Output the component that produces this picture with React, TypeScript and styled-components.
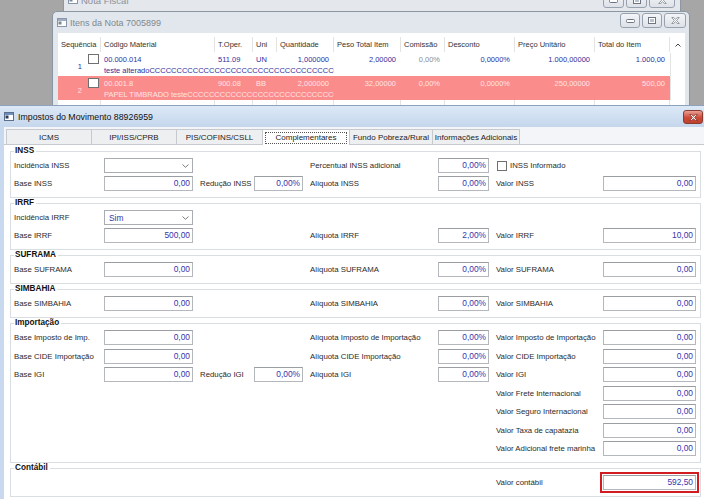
import React from "react";
import styled, { createGlobalStyle } from "styled-components";

const GlobalStyle = createGlobalStyle`
  html, body { margin: 0; padding: 0; }
  body {
    background: #a6a6a6;
    font-family: "Liberation Sans", Arial, sans-serif;
  }
`;

const Desktop = styled.div`
  position: relative;
  width: 704px;
  height: 499px;
  overflow: hidden;
  background: #a6a6a6;
`;

/* ---------- window chrome ---------- */

const BackWindow = styled.div`
  position: absolute;
  left: 63px;
  top: -16px;
  width: 618px;
  height: 40px;
  box-sizing: border-box;
  background: #e4e8ed;
  border: 1px solid #8d97a3;
  border-radius: 5px 5px 0 0;
  display: flex;
  align-items: flex-start;
  padding: 10px 2px 0 4px;
  gap: 3px;
  color: #8a9098;
  font-size: 9.5px;
`;

const ItemsWindow = styled.div`
  position: absolute;
  left: 52px;
  top: 11px;
  width: 638px;
  height: 110px;
  box-sizing: border-box;
  background: #e2e7ed;
  border: 1px solid #8b96a3;
  border-radius: 5px 5px 0 0;
  display: flex;
  flex-direction: column;
`;

const InactiveTitleBar = styled.div`
  height: 21px;
  flex: none;
  display: flex;
  align-items: center;
  padding-left: 4px;
  gap: 3px;
  color: #80878f;
  font-size: 9px;
`;

const CaptionButtons = styled.div<{ $top?: number }>`
  margin-left: auto;
  align-self: flex-start;
  margin-top: ${(p) => p.$top ?? 1}px;
  margin-right: 3px;
  display: flex;
  gap: 2px;
`;

const CaptionButton = styled.div<{ $w: number }>`
  width: ${(p) => p.$w}px;
  height: 15px;
  box-sizing: border-box;
  border: 1px solid #98a2ae;
  border-radius: 3px;
  background: linear-gradient(#f3f5f8, #dde2e8);
  display: flex;
  align-items: center;
  justify-content: center;
`;

const MainWindow = styled.div`
  position: absolute;
  left: 0;
  top: 105px;
  width: 704px;
  height: 394px;
  box-sizing: border-box;
  background: #c8d9ef;
  border-top: 1px solid #8ea2bc;
  display: flex;
  flex-direction: column;
`;

const ActiveTitleBar = styled.div`
  height: 21px;
  flex: none;
  display: flex;
  align-items: center;
  gap: 4px;
  padding-left: 4px;
  background: linear-gradient(#dce8f6, #c5d7ed);
  color: #111;
  font-size: 8.8px;
`;

const CloseRed = styled.div`
  margin-left: auto;
  margin-right: 1px;
  align-self: flex-start;
  margin-top: 4px;
  width: 20px;
  height: 14px;
  box-sizing: border-box;
  border: 1px solid #8b3a30;
  border-radius: 3px;
  background: linear-gradient(#e9a094, #cc4a38 55%, #c0402e);
  display: flex;
  align-items: center;
  justify-content: center;
`;

const WindowBody = styled.div`
  flex: 1;
  margin-left: 4px;
  background: #f3f5f8;
  display: flex;
  flex-direction: column;
  min-height: 0;
`;

/* ---------- tabs ---------- */

const TabStrip = styled.div`
  height: 17px;
  flex: none;
  display: flex;
  align-items: flex-end;
  padding-left: 2px;
  box-sizing: border-box;
`;

const Tab = styled.div<{ $w: number; $active?: boolean }>`
  width: ${(p) => p.$w}px;
  height: ${(p) => (p.$active ? 16 : 15)}px;
  margin-right: -1px;
  box-sizing: border-box;
  border: 1px solid #c6c9cd;
  border-bottom: none;
  background: ${(p) => (p.$active ? "#ffffff" : "#eeeff1")};
  color: #222;
  font-size: 8px;
  display: flex;
  align-items: center;
  justify-content: center;
  position: relative;
  z-index: ${(p) => (p.$active ? 1 : 0)};
  margin-bottom: ${(p) => (p.$active ? -1 : 0)}px;
`;

const FocusBox = styled.span`
  border: 1px dotted #555;
  padding: 0 10px;
  line-height: 10px;
`;

const Panel = styled.div`
  flex: 1;
  background: #ffffff;
  border-top: 1px solid #c6c9cd;
  padding: 6px 3px 0 6px;
  display: flex;
  flex-direction: column;
  gap: 5px;
`;

/* ---------- groups / form ---------- */

const Group = styled.div`
  position: relative;
  border: 1px solid #d9dee3;
  padding: 6px 4px 6px 3px;
`;

const Legend = styled.div`
  position: absolute;
  top: -6px;
  left: 3px;
  padding: 0 2px 0 1px;
  background: #ffffff;
  font-size: 8.2px;
  font-weight: bold;
  color: #111;
  line-height: 10px;
`;

const Rows = styled.div<{ $gap: number }>`
  display: flex;
  flex-direction: column;
  gap: ${(p) => p.$gap}px;
`;

const Row = styled.div`
  display: grid;
  grid-template-columns: 90px 89px 61px 49px 135px 51px 114px 93px;
  height: 15px;
  align-items: center;
`;

const Label = styled.div<{ $col: number }>`
  grid-column: ${(p) => p.$col};
  padding-left: ${(p) => (p.$col === 1 ? 0 : 7)}px;
  font-size: 7.8px;
  color: #2a2a2a;
  white-space: nowrap;
`;

const Field = styled.div<{ $col: number; $highlight?: boolean }>`
  grid-column: ${(p) => p.$col};
  height: 15px;
  box-sizing: border-box;
  border: 1px solid #b4b7bb;
  border-top-color: #9a9da2;
  background: #fff;
  font-size: 8.4px;
  color: #3636ad;
  text-align: right;
  padding-right: 2px;
  line-height: 13px;
  outline: ${(p) => (p.$highlight ? "2px solid #d11c22" : "none")};
  outline-offset: 1px;
`;

const Select = styled.div<{ $col: number }>`
  grid-column: ${(p) => p.$col};
  height: 15px;
  box-sizing: border-box;
  border: 1px solid #a9acb0;
  background: #fff;
  font-size: 8.4px;
  color: #3636ad;
  display: flex;
  align-items: center;
  justify-content: space-between;
  padding: 0 3px 0 4px;
`;

const CheckWrap = styled.div<{ $col: number }>`
  grid-column: ${(p) => p.$col} / span 2;
  display: flex;
  align-items: center;
  gap: 3px;
  padding-left: 8px;
  font-size: 7.8px;
  color: #2a2a2a;
`;

const CheckBox = styled.span`
  width: 10px;
  height: 10px;
  box-sizing: border-box;
  border: 1px solid #707070;
  background: #fff;
  flex: none;
`;

/* ---------- items grid ---------- */

const COLS = "43px 114px 38px 24px 57px 67px 44px 70px 80px 75px 15px";

const ItemsGrid = styled.div`
  flex: 1;
  margin: 0 4px 0 5px;
  background: #fff;
  padding-top: 4px;
  font-size: 7.5px;
  color: #333;
  display: flex;
  flex-direction: column;
`;

const GridHeader = styled.div`
  display: grid;
  grid-template-columns: ${COLS};
  height: 15px;
`;

const HeadCell = styled.div`
  border-right: 1px solid #e3e3e3;
  padding-left: 3px;
  display: flex;
  align-items: center;
  white-space: nowrap;
  overflow: hidden;
  &:last-child {
    border-right: none;
    justify-content: center;
    padding-left: 0;
  }
`;

const ItemRow = styled.div<{ $selected?: boolean }>`
  display: grid;
  grid-template-columns: ${COLS};
  grid-template-rows: 12px 11px;
  height: 24px;
  padding-top: 1px;
  box-sizing: border-box;
  color: ${(p) => (p.$selected ? "#fde4e4" : "#2f2f9c")};
  background: ${(p) =>
    p.$selected
      ? "linear-gradient(to right, #fb8c8c 612px, #ffffff 612px)"
      : "#ffffff"};
`;

const SeqCell = styled.div`
  grid-row: 1 / span 2;
  display: flex;
  justify-content: flex-end;
  gap: 6px;
  padding-right: 2px;
  align-items: flex-start;
`;

const SeqNumber = styled.span`
  margin-top: 9px;
`;

const ItemCheck = styled.span`
  margin-top: 1px;
  width: 11px;
  height: 10px;
  box-sizing: border-box;
  border: 1px solid #707070;
  background: #fff;
`;

const Cell = styled.div<{ $right?: boolean; $muted?: string }>`
  display: flex;
  align-items: center;
  white-space: nowrap;
  justify-content: ${(p) => (p.$right ? "flex-end" : "flex-start")};
  padding: ${(p) => (p.$right ? "0 5px 0 0" : "0 0 0 3px")};
  color: ${(p) => p.$muted || "inherit"};
`;

const Description = styled.div`
  grid-row: 2;
  grid-column: 2 / span 4;
  padding-left: 3px;
  white-space: nowrap;
  overflow: hidden;
  display: flex;
  align-items: center;
`;

const ScrollCell = styled.div`
  grid-column: 11;
  grid-row: 1 / span 2;
  border-left: 1px solid #e3e3e3;
  background: #fff;
`;

const EmptyRow = styled.div`
  display: grid;
  grid-template-columns: ${COLS};
  flex: 1;
  & > div {
    border-right: 1px solid #e3e3e3;
  }
`;

/* ---------- icons ---------- */

function WinIcon({ faded }: { faded?: boolean }) {
  return (
    <svg width="10" height="9" viewBox="0 0 10 9">
      <rect x="0.5" y="0.5" width="9" height="8" fill="#fff" stroke={faded ? "#8796a8" : "#5b6f8d"} />
      <rect x="1" y="1" width="8" height="2" fill={faded ? "#9fb0c4" : "#6f8fbf"} />
      <rect x="1.5" y="3.5" width="3" height="3" fill={faded ? "#7c8796" : "#2d3b55"} />
    </svg>
  );
}

function MinGlyph() {
  return (
    <svg width="9" height="5" viewBox="0 0 9 5">
      <rect x="0.5" y="1.5" width="8" height="3" rx="1" fill="#fff" stroke="#6c7580" />
    </svg>
  );
}

function MaxGlyph() {
  return (
    <svg width="8" height="7" viewBox="0 0 8 7">
      <rect x="0.5" y="0.5" width="7" height="6" fill="#fff" stroke="#6c7580" />
      <rect x="2" y="2" width="4" height="3" fill="#b9c2cc" />
    </svg>
  );
}

function CloseGlyph({ color = "#6c7580", fill = "#fff" }: { color?: string; fill?: string }) {
  return (
    <svg width="9" height="7" viewBox="0 0 9 7">
      <path
        d="M0.8 0.5 H2.6 L4.5 2.3 L6.4 0.5 H8.2 L5.6 3.5 L8.2 6.5 H6.4 L4.5 4.7 L2.6 6.5 H0.8 L3.4 3.5 Z"
        fill={fill}
        stroke={color}
        strokeWidth="0.7"
      />
    </svg>
  );
}

function Chevron() {
  return (
    <svg width="7" height="4" viewBox="0 0 7 4">
      <path d="M0.5 0.5 L3.5 3.3 L6.5 0.5" fill="none" stroke="#6e6e6e" strokeWidth="0.9" />
    </svg>
  );
}

/* ---------- data ---------- */

type CellDef =
  | { kind: "label"; col: number; text: string }
  | { kind: "field"; col: number; text: string; highlight?: boolean }
  | { kind: "select"; col: number; text: string }
  | { kind: "check"; col: number; text: string };

const L = (col: number, text: string): CellDef => ({ kind: "label", col, text });
const F = (col: number, text: string, highlight?: boolean): CellDef => ({
  kind: "field",
  col,
  text,
  highlight,
});

const groups: { title: string; gap?: number; rows: CellDef[][] }[] = [
  {
    title: "INSS",
    rows: [
      [
        L(1, "Incidência INSS"),
        { kind: "select", col: 2, text: "" },
        L(5, "Percentual INSS adicional"),
        F(6, "0,00%"),
        { kind: "check", col: 7, text: "INSS Informado" },
      ],
      [
        L(1, "Base INSS"),
        F(2, "0,00"),
        L(3, "Redução INSS"),
        F(4, "0,00%"),
        L(5, "Alíquota INSS"),
        F(6, "0,00%"),
        L(7, "Valor INSS"),
        F(8, "0,00"),
      ],
    ],
  },
  {
    title: "IRRF",
    rows: [
      [L(1, "Incidência IRRF"), { kind: "select", col: 2, text: "Sim" }],
      [
        L(1, "Base IRRF"),
        F(2, "500,00"),
        L(5, "Alíquota IRRF"),
        F(6, "2,00%"),
        L(7, "Valor IRRF"),
        F(8, "10,00"),
      ],
    ],
  },
  {
    title: "SUFRAMA",
    rows: [
      [
        L(1, "Base SUFRAMA"),
        F(2, "0,00"),
        L(5, "Alíquota SUFRAMA"),
        F(6, "0,00%"),
        L(7, "Valor SUFRAMA"),
        F(8, "0,00"),
      ],
    ],
  },
  {
    title: "SIMBAHIA",
    rows: [
      [
        L(1, "Base SIMBAHIA"),
        F(2, "0,00"),
        L(5, "Alíquota SIMBAHIA"),
        F(6, "0,00%"),
        L(7, "Valor SIMBAHIA"),
        F(8, "0,00"),
      ],
    ],
  },
  {
    title: "Importação",
    gap: 3.5,
    rows: [
      [
        L(1, "Base Imposto de Imp."),
        F(2, "0,00"),
        L(5, "Alíquota Imposto de Importação"),
        F(6, "0,00%"),
        L(7, "Valor Imposto de Importação"),
        F(8, "0,00"),
      ],
      [
        L(1, "Base CIDE Importação"),
        F(2, "0,00"),
        L(5, "Alíquota CIDE Importação"),
        F(6, "0,00%"),
        L(7, "Valor CIDE Importação"),
        F(8, "0,00"),
      ],
      [
        L(1, "Base IGI"),
        F(2, "0,00"),
        L(3, "Redução IGI"),
        F(4, "0,00%"),
        L(5, "Alíquota IGI"),
        F(6, "0,00%"),
        L(7, "Valor IGI"),
        F(8, "0,00"),
      ],
      [L(7, "Valor Frete Internacional"), F(8, "0,00")],
      [L(7, "Valor Seguro Internacional"), F(8, "0,00")],
      [L(7, "Valor Taxa de capatazia"), F(8, "0,00")],
      [L(7, "Valor Adicional frete marinha"), F(8, "0,00")],
    ],
  },
  {
    title: "Contábil",
    rows: [[L(7, "Valor contábil"), F(8, "592,50", true)]],
  },
];

const tabs = [
  { label: "ICMS", w: 86 },
  { label: "IPI/ISS/CPRB", w: 86 },
  { label: "PIS/COFINS/CSLL", w: 87 },
  { label: "Complementares", w: 88, active: true },
  { label: "Fundo Pobreza/Rural", w: 84 },
  { label: "Informações Adicionais", w: 88 },
];

const headers = [
  "Sequência",
  "Código Material",
  "T.Oper.",
  "Uni",
  "Quantidade",
  "Peso Total Item",
  "Comissão",
  "Desconto",
  "Preço Unitário",
  "Total do Item",
];

const items = [
  {
    seq: "1",
    code: "00.000.014",
    oper: "511.09",
    uni: "UN",
    qty: "1,000000",
    peso: "2,00000",
    comissao: "0,00%",
    desconto: "0,0000%",
    preco: "1.000,00000",
    total: "1.000,00",
    desc: "teste alterado" + "C".repeat(60),
  },
  {
    seq: "2",
    code: "00.001.8",
    oper: "900.08",
    uni: "BB",
    qty: "2,000000",
    peso: "32,00000",
    comissao: "0,00%",
    desconto: "0,0000%",
    preco: "250,00000",
    total: "500,00",
    desc: "PAPEL TIMBRADO teste" + "C".repeat(60),
    selected: true,
  },
];

function renderCell(c: CellDef, i: number) {
  switch (c.kind) {
    case "label":
      return (
        <Label key={i} $col={c.col}>
          {c.text}
        </Label>
      );
    case "field":
      return (
        <Field key={i} $col={c.col} $highlight={c.highlight}>
          {c.text}
        </Field>
      );
    case "select":
      return (
        <Select key={i} $col={c.col}>
          <span>{c.text}</span>
          <Chevron />
        </Select>
      );
    case "check":
      return (
        <CheckWrap key={i} $col={c.col}>
          <CheckBox />
          {c.text}
        </CheckWrap>
      );
  }
}

export default function App() {
  return (
    <>
      <GlobalStyle />
      <Desktop>
        <BackWindow>
          <WinIcon faded />
          <span>Nota Fiscal</span>
          <CaptionButtons $top={-2}>
            <CaptionButton $w={21}>
              <MinGlyph />
            </CaptionButton>
            <CaptionButton $w={21}>
              <MaxGlyph />
            </CaptionButton>
            <CaptionButton $w={26}>
              <CloseGlyph />
            </CaptionButton>
          </CaptionButtons>
        </BackWindow>

        <ItemsWindow>
          <InactiveTitleBar>
            <WinIcon faded />
            <span>Itens da Nota 7005899</span>
            <CaptionButtons>
              <CaptionButton $w={20}>
                <MinGlyph />
              </CaptionButton>
              <CaptionButton $w={20}>
                <MaxGlyph />
              </CaptionButton>
              <CaptionButton $w={22}>
                <CloseGlyph />
              </CaptionButton>
            </CaptionButtons>
          </InactiveTitleBar>
          <ItemsGrid>
            <GridHeader>
              {headers.map((h) => (
                <HeadCell key={h}>{h}</HeadCell>
              ))}
              <HeadCell>
                <svg width="6" height="4" viewBox="0 0 6 4">
                  <path d="M0.5 3.5 L3 1 L5.5 3.5" fill="none" stroke="#444" strokeWidth="1" />
                </svg>
              </HeadCell>
            </GridHeader>
            {items.map((it) => (
              <ItemRow key={it.seq} $selected={it.selected}>
                <SeqCell>
                  <SeqNumber>{it.seq}</SeqNumber>
                  <ItemCheck />
                </SeqCell>
                <Cell>{it.code}</Cell>
                <Cell>{it.oper}</Cell>
                <Cell>{it.uni}</Cell>
                <Cell $right>{it.qty}</Cell>
                <Cell $right>{it.peso}</Cell>
                <Cell $right $muted={it.selected ? undefined : "#8c8c8c"}>
                  {it.comissao}
                </Cell>
                <Cell $right>{it.desconto}</Cell>
                <Cell $right>{it.preco}</Cell>
                <Cell $right>{it.total}</Cell>
                <ScrollCell />
                <Description>{it.desc}</Description>
              </ItemRow>
            ))}
            <EmptyRow>
              {headers.map((h) => (
                <div key={h} />
              ))}
            </EmptyRow>
          </ItemsGrid>
        </ItemsWindow>

        <MainWindow>
          <ActiveTitleBar>
            <WinIcon />
            <span>Impostos do Movimento 88926959</span>
            <CloseRed>
              <CloseGlyph color="#7a2418" fill="#fff" />
            </CloseRed>
          </ActiveTitleBar>
          <WindowBody>
            <TabStrip>
              {tabs.map((t) => (
                <Tab key={t.label} $w={t.w} $active={t.active}>
                  {t.active ? <FocusBox>{t.label}</FocusBox> : t.label}
                </Tab>
              ))}
            </TabStrip>
            <Panel>
              {groups.map((g) => (
                <Group key={g.title}>
                  <Legend>{g.title}</Legend>
                  <Rows $gap={g.gap ?? 3}>
                    {g.rows.map((r, ri) => (
                      <Row key={ri}>{r.map(renderCell)}</Row>
                    ))}
                  </Rows>
                </Group>
              ))}
            </Panel>
          </WindowBody>
        </MainWindow>
      </Desktop>
    </>
  );
}
